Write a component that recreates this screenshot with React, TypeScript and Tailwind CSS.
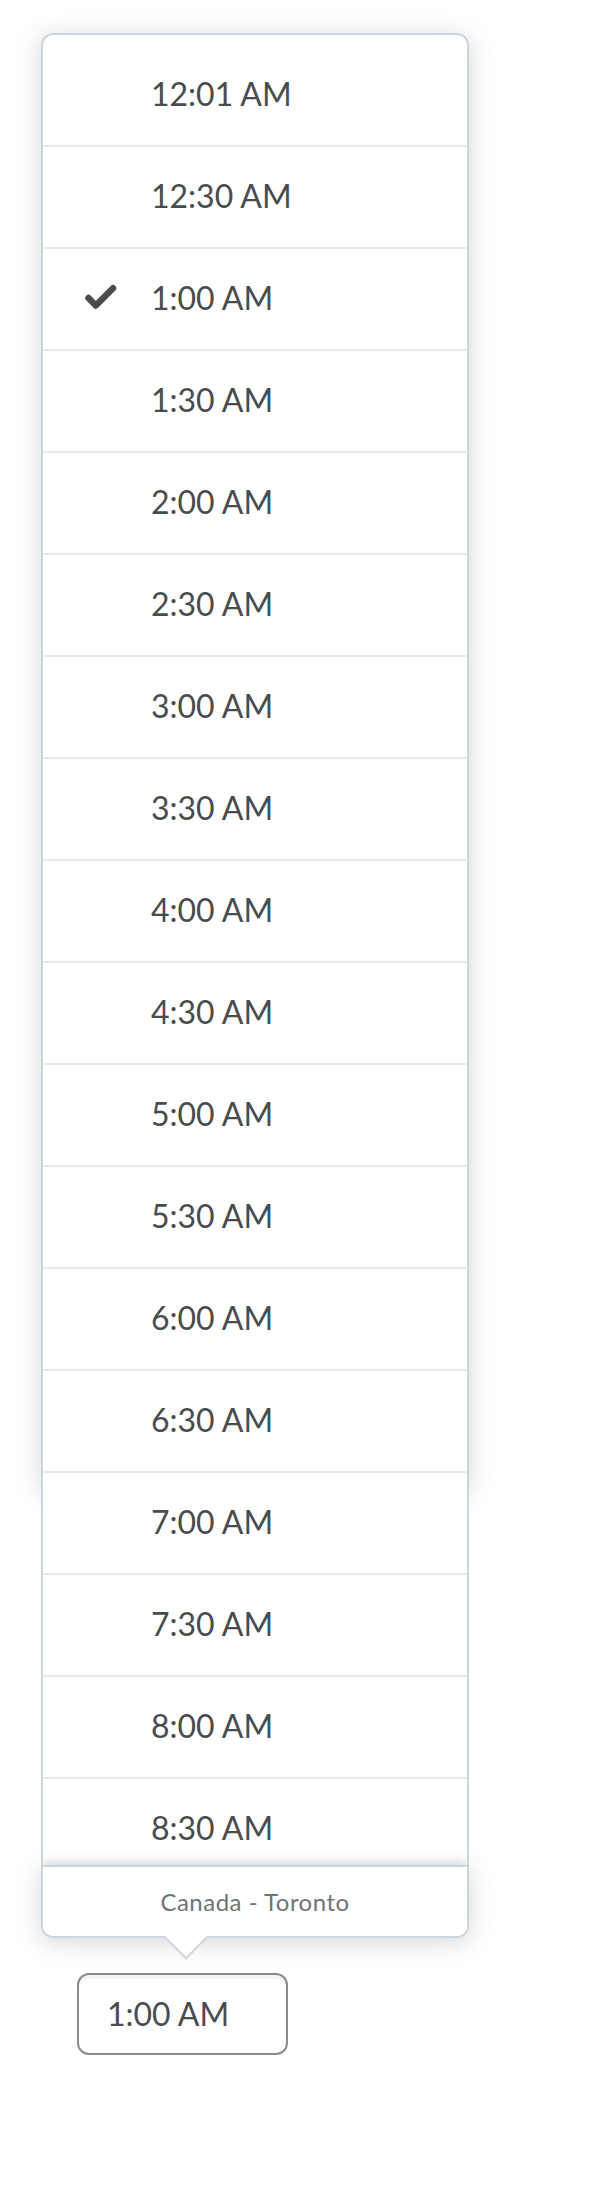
import React from "react";

const times = [
  "12:01 AM",
  "12:30 AM",
  "1:00 AM",
  "1:30 AM",
  "2:00 AM",
  "2:30 AM",
  "3:00 AM",
  "3:30 AM",
  "4:00 AM",
  "4:30 AM",
  "5:00 AM",
  "5:30 AM",
  "6:00 AM",
  "6:30 AM",
  "7:00 AM",
  "7:30 AM",
  "8:00 AM",
  "8:30 AM",
];

function Check() {
  return (
    <svg width="36" height="36" viewBox="0 0 36 36" fill="none">
      <polyline
        points="5.5,18 12.8,25.5 30,8.2"
        stroke="#494c4e"
        strokeWidth="6.5"
        strokeLinecap="round"
        strokeLinejoin="round"
      />
    </svg>
  );
}

export default function App() {
  return (
    <div className="min-h-[2200px] bg-white pt-[33px] font-['Lato',sans-serif] text-[#494c4e]">
      <div className="relative ml-[41px] w-[428px]">
        {/* drop shadow layers */}
        <div className="absolute left-0 right-0 top-0 h-[1457px] rounded-[12px] shadow-[0_4px_24px_rgba(86,90,92,0.25)]" />
        <div className="absolute bottom-0 left-0 right-0 h-[75px] rounded-[12px] shadow-[0_4px_24px_rgba(86,90,92,0.25)]" />

        <div className="relative overflow-hidden rounded-[12px] border-2 border-[#cdd5dc] bg-white">
          <div className="h-[1830px] overflow-hidden pt-[10px]">
            {times.map((t) => (
              <div
                key={t}
                className="flex h-[102px] items-center border-b-2 border-[#e6eaf0] pb-[3px] pl-[40px]"
              >
                <div className="mr-[32px] flex h-[36px] w-[36px] items-center justify-center">
                  {t === "1:00 AM" ? <Check /> : null}
                </div>
                <span className="text-[32px] leading-[40px]">{t}</span>
              </div>
            ))}
          </div>
          <div className="relative z-10 flex h-[71px] items-center justify-center border-t-2 border-[#cdd5dc] bg-white shadow-[0_-4px_8px_rgba(73,76,78,0.2)]">
            <span className="text-[24px] leading-[30px] tracking-[0.5px] text-[#6e7477]">
              Canada - Toronto
            </span>
          </div>
        </div>

        {/* pointer */}
        <div className="absolute bottom-[-24px] left-[121px] z-20 h-[26px] w-[48px] overflow-hidden">
          <div className="absolute left-[8px] top-[-15px] h-[32px] w-[32px] rotate-45 border-b-2 border-r-2 border-[#cdd5dc] bg-white" />
        </div>
      </div>

      <div className="ml-[77px] mt-[35px] flex h-[82px] w-[211px] items-center rounded-[12px] border-2 border-[#868c8f] bg-white pl-[28px] shadow-[inset_0_4px_0_0_rgba(185,194,208,0.2)]">
        <span className="text-[32px] leading-[40px] text-[#494c4e]">1:00 AM</span>
      </div>
    </div>
  );
}
